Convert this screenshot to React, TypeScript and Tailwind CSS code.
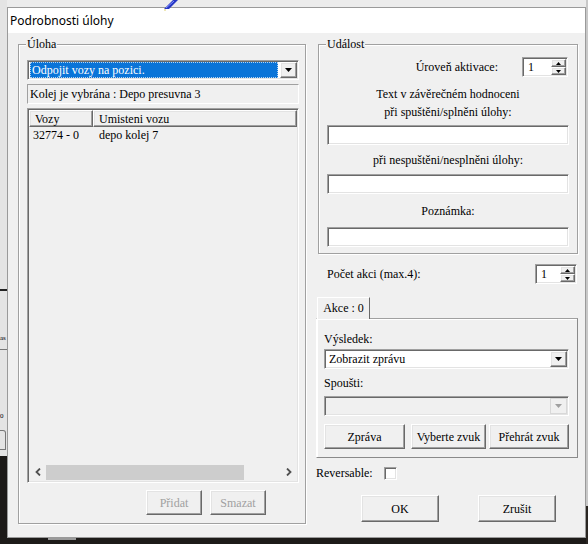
import React from 'react';

const serif = "font-['Liberation_Serif',serif] text-[12px] text-black";
const sunken =
  'border border-t-[#a0a0a0] border-l-[#a0a0a0] border-r-white border-b-white shadow-[inset_1px_1px_0_#696969,inset_-1px_-1px_0_#e3e3e3]';
const raised =
  'border border-t-white border-l-white border-r-[#696969] border-b-[#696969] shadow-[inset_-1px_-1px_0_#a0a0a0,inset_1px_1px_0_#e3e3e3] bg-[#f0f0f0]';

function Arrow({ color = '#000' }: { color?: string }) {
  return (
    <svg width="7" height="4" viewBox="0 0 7 4">
      <path d="M0 0h7L3.5 4z" fill={color} />
    </svg>
  );
}

function Tiny({ up }: { up?: boolean }) {
  return (
    <svg width="5" height="3" viewBox="0 0 5 3">
      <path d={up ? 'M0 3h5L2.5 0z' : 'M0 0h5L2.5 3z'} fill="#000" />
    </svg>
  );
}

function Button({
  label,
  w,
  h = 25,
  disabled,
}: {
  label: string;
  w: number;
  h?: number;
  disabled?: boolean;
}) {
  return (
    <div
      className={`${raised} flex items-center justify-center ${disabled ? 'text-[#a0a0a0]' : 'text-black'}`}
      style={{ width: w, height: h }}
    >
      {label}
    </div>
  );
}

function Spinner({ w }: { w: number }) {
  return (
    <div className={`${sunken} flex h-[20px] bg-white`} style={{ width: w }}>
      <div className="flex-1 pl-[5px] leading-[16px] pt-px">1</div>
      <div className="flex w-[16px] flex-col py-px pr-px">
        <div className={`${raised} flex h-[8px] items-center justify-center`}>
          <Tiny up />
        </div>
        <div className={`${raised} flex h-[8px] items-center justify-center`}>
          <Tiny />
        </div>
      </div>
    </div>
  );
}

function Input() {
  return <div className={`${sunken} h-[20px] w-[242px] bg-white`} />;
}

function Caption({ children, className = '' }: { children: React.ReactNode; className?: string }) {
  return <div className={`text-center leading-[18px] ${className}`}>{children}</div>;
}

function GroupBox({
  title,
  className,
  children,
}: {
  title: string;
  className: string;
  children: React.ReactNode;
}) {
  return (
    <div
      className={`relative border border-[#a0a0a0] shadow-[inset_1px_1px_0_#fff,1px_1px_0_#fff] ${className}`}
    >
      <div className="absolute -top-[9px] left-[7px] bg-[#f0f0f0] px-[1px] leading-[16px]">{title}</div>
      {children}
    </div>
  );
}

function Chevron({ left }: { left?: boolean }) {
  return (
    <svg width="6" height="8" viewBox="0 0 6 8">
      <path
        d={left ? 'M5 0.5L1.5 4L5 7.5' : 'M1 0.5L4.5 4L1 7.5'}
        fill="none"
        stroke="#505050"
        strokeWidth="1.8"
      />
    </svg>
  );
}

export default function App() {
  return (
    <div className={`relative h-[544px] w-[588px] overflow-hidden bg-[#ececec] ${serif}`}>
      {/* desktop behind the dialog */}
      <div className="absolute left-0 top-0 h-[544px] w-[7px] overflow-hidden bg-[#e4e4e4]">
        <div className="mt-[289px] h-[2px] bg-[#222]" />
        <div className="mt-[42px] text-[7px] leading-[10px]">as</div>
        <div className="mt-[6px] h-px bg-[#777]" />
        <div className="mt-[60px] text-[7px] leading-[12px]">0</div>
        <div className="mt-[8px] h-[20px] w-[6px] rounded-tr-[3px] border border-l-0 border-[#777]" />
        <div className="mt-[6px] h-[90px] bg-[#1c1a18]" />
      </div>
      <div className="absolute bottom-0 left-0 h-[7px] w-[588px] bg-[#1d1b19]">
        <div className="ml-[48px] h-[3px] w-[28px] bg-[#9a9a9a]" />
      </div>
      <div className="absolute right-0 top-0 h-[544px] w-[2px] bg-[#c8c8c8]">
        <div className="mt-[506px] h-[38px] bg-[#2a2622]" />
      </div>

      {/* dialog window */}
      <div className="absolute left-[7px] top-[7px] flex h-[531px] w-[579px] flex-col border border-[#9a9a9a] bg-[#f0f0f0]">
        <div className="flex h-[25px] items-center bg-white pl-[2px] font-['Noto_Sans',sans-serif] text-[12px] text-black">
          Podrobnosti úlohy
        </div>
        <div className="flex flex-1 pl-[10px] pt-[11px]">
          {/* Úloha */}
          <GroupBox title="Úloha" className="h-[480px] w-[288px]">
            <div className="flex flex-col pl-[8px] pt-[15px]">
              <div className={`${sunken} flex h-[20px] w-[272px] bg-white p-px`}>
                <div className="ml-px flex h-[16px] flex-1 items-center bg-[#0a74d8] pl-[2px] text-white outline-1 -outline-offset-1 outline-dotted outline-[#b4d2f0]">
                  Odpojit vozy na pozici.
                </div>
                <div className={`${raised} ml-[2px] flex h-[16px] w-[17px] items-center justify-center`}>
                  <Arrow />
                </div>
              </div>
              <div className="mt-[4px] flex h-[20px] w-[272px] items-center border-l border-t border-l-[#a0a0a0] border-t-[#a0a0a0] border-b border-r border-b-white border-r-white pl-[2px]">
                Kolej je vybrána : Depo presuvna 3
              </div>
              <div className={`${sunken} mt-[4px] flex h-[375px] w-[272px] flex-col p-[1px]`}>
                <div className="flex h-[17px]">
                  <div className={`${raised} flex w-[64px] items-center pl-[5px]`}>Vozy</div>
                  <div className={`${raised} flex flex-1 items-center pl-[5px]`}>Umisteni vozu</div>
                </div>
                <div className="flex h-[15px] items-center pt-px">
                  <div className="w-[64px] pl-[4px]">32774 - 0</div>
                  <div className="pl-[6px]">depo kolej 7</div>
                </div>
                <div className="flex-1" />
                <div className="flex h-[18px] items-center">
                  <div className="flex w-[17px] items-center justify-center">
                    <Chevron left />
                  </div>
                  <div className="h-[15px] w-[198px] bg-[#cdcdcd]" />
                  <div className="flex-1" />
                  <div className="flex w-[17px] items-center justify-center">
                    <Chevron />
                  </div>
                </div>
              </div>
              <div className="mt-[7px] flex gap-[8px] pl-[119px]">
                <Button label="Přidat" w={56} disabled />
                <Button label="Smazat" w={56} disabled />
              </div>
            </div>
          </GroupBox>

          {/* right column */}
          <div className="ml-[10px] flex w-[262px] flex-col">
            <GroupBox title="Událost" className="ml-[2px] h-[210px] w-[260px]">
              <div className="flex flex-col pl-[8px] pt-[12px]">
                <div className="flex items-center justify-end gap-[24px] pr-[9px]">
                  <span>Úroveň aktivace:</span>
                  <Spinner w={46} />
                </div>
                <div className="w-[242px]">
                  <Caption className="mt-[8px]">Text v závěrečném hodnoceni</Caption>
                  <Caption>při spuštěni/splněni úlohy:</Caption>
                </div>
                <div className="mt-[4px]">
                  <Input />
                </div>
                <Caption className="mt-[6px] w-[242px]">při nespuštěni/nesplněni úlohy:</Caption>
                <div className="mt-[5px]">
                  <Input />
                </div>
                <Caption className="mt-[8px] w-[242px]">Poznámka:</Caption>
                <div className="mt-[7px]">
                  <Input />
                </div>
              </div>
            </GroupBox>

            <div className="mt-[10px] flex items-center justify-between pl-[11px] pr-[1px]">
              <span>Počet akci (max.4):</span>
              <Spinner w={42} />
            </div>

            <div className="mt-[13px] flex">
              <div className="relative z-10 -mb-px ml-px flex h-[22px] w-[53px] items-center justify-center border-l border-t border-r border-l-white border-t-white border-r-[#696969] bg-[#f0f0f0] pb-[2px]">
                Akce : 0
              </div>
            </div>
            <div className="flex h-[140px] w-[262px] flex-col border border-l-white border-t-[#a0a0a0] border-r-[#8a8a8a] border-b-[#8a8a8a] pl-[7px] shadow-[inset_1px_1px_0_#fff]">
              <div className="mt-[11px] leading-[18px]">Výsledek:</div>
              <div className={`${sunken} mt-px flex h-[20px] w-[245px] items-center bg-white p-px`}>
                <div className="flex-1 pl-[3px]">Zobrazit zprávu</div>
                <div className={`${raised} flex h-[16px] w-[17px] items-center justify-center`}>
                  <Arrow />
                </div>
              </div>
              <div className="mt-[5px] leading-[18px]">Spoušti:</div>
              <div className={`${sunken} mt-[4px] flex h-[20px] w-[245px] items-center justify-end bg-[#f0f0f0] p-px`}>
                <div className="flex h-[16px] w-[17px] items-center justify-center border border-[#d8d8d8]">
                  <Arrow color="#a0a0a0" />
                </div>
              </div>
              <div className="mt-[8px] flex">
                <Button label="Zpráva" w={81} />
                <div className="ml-[6px]">
                  <Button label="Vyberte zvuk" w={75} />
                </div>
                <div className="ml-[3px]">
                  <Button label="Přehrát zvuk" w={80} />
                </div>
              </div>
            </div>

            <div className="mt-[8px] flex items-center">
              <span className="leading-[14px]">Reversable:</span>
              <div className={`${sunken} ml-[11px] h-[13px] w-[13px] bg-white`} />
            </div>

            <div className="mt-[15px] flex gap-[39px] pl-[45px]">
              <Button label="OK" w={78} h={27} />
              <Button label="Zrušit" w={78} h={27} />
            </div>
          </div>
        </div>
      </div>

      <svg className="absolute left-[158px] top-0" width="22" height="11" viewBox="0 0 22 11">
        <path d="M6 9L15 0H20L11 9z" fill="#2636c4" />
        <path d="M8 8L16 1" stroke="#8090ff" strokeWidth="1" />
        <circle cx="7" cy="10" r="1" fill="#e8e0a0" />
      </svg>
    </div>
  );
}
